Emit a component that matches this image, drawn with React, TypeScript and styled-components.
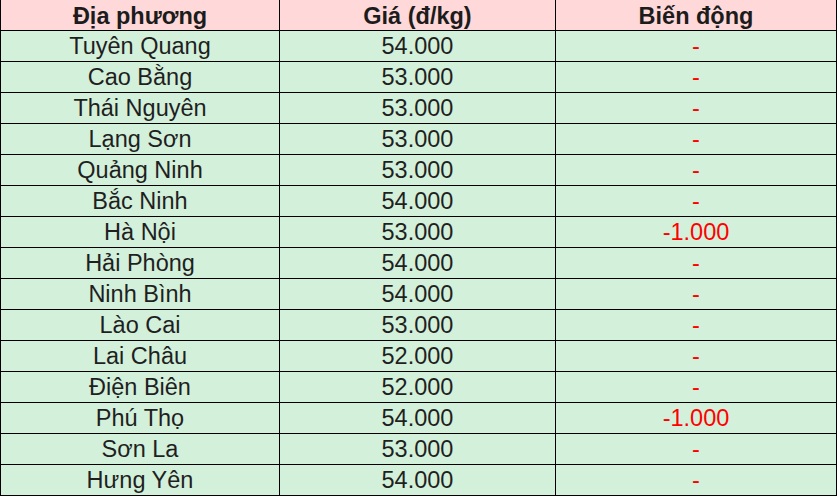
import React from 'react';
import styled, { createGlobalStyle } from 'styled-components';

const GlobalStyle = createGlobalStyle`
  html, body {
    margin: 0;
    padding: 0;
    background: #ffffff;
  }
  body {
    font-family: 'Liberation Sans', Arial, sans-serif;
  }
`;

const Table = styled.table`
  width: 836px;
  border-collapse: collapse;
  table-layout: fixed;
  border: 1px solid #000;
  border-top: none;
`;

const HeadCell = styled.th`
  height: 28px;
  padding: 2px 0 0;
  background: #ffd9d9;
  border: 1px solid #000;
  border-top: none;
  font-size: 23.5px;
  font-weight: 700;
  color: #1c1c1c;
  text-align: center;
  vertical-align: middle;
  line-height: 28px;
`;

const Cell = styled.td<{ $red?: boolean }>`
  height: 29px;
  padding: 1px 0 0;
  background: #d3f0db;
  border: 1px solid #000;
  font-size: 23.5px;
  color: ${({ $red }) => ($red ? '#ff0000' : '#1f1f1f')};
  text-align: center;
  vertical-align: middle;
  line-height: 29px;
`;

interface Row {
  place: string;
  price: string;
  change: string;
}

const rows: Row[] = [
  { place: 'Tuyên Quang', price: '54.000', change: '-' },
  { place: 'Cao Bằng', price: '53.000', change: '-' },
  { place: 'Thái Nguyên', price: '53.000', change: '-' },
  { place: 'Lạng Sơn', price: '53.000', change: '-' },
  { place: 'Quảng Ninh', price: '53.000', change: '-' },
  { place: 'Bắc Ninh', price: '54.000', change: '-' },
  { place: 'Hà Nội', price: '53.000', change: '-1.000' },
  { place: 'Hải Phòng', price: '54.000', change: '-' },
  { place: 'Ninh Bình', price: '54.000', change: '-' },
  { place: 'Lào Cai', price: '53.000', change: '-' },
  { place: 'Lai Châu', price: '52.000', change: '-' },
  { place: 'Điện Biên', price: '52.000', change: '-' },
  { place: 'Phú Thọ', price: '54.000', change: '-1.000' },
  { place: 'Sơn La', price: '53.000', change: '-' },
  { place: 'Hưng Yên', price: '54.000', change: '-' },
];

const App: React.FC = () => (
  <>
    <GlobalStyle />
    <Table>
      <colgroup>
        <col style={{ width: 279 }} />
        <col style={{ width: 276 }} />
        <col style={{ width: 281 }} />
      </colgroup>
      <thead>
        <tr>
          <HeadCell>Địa phương</HeadCell>
          <HeadCell>Giá (đ/kg)</HeadCell>
          <HeadCell>Biến động</HeadCell>
        </tr>
      </thead>
      <tbody>
        {rows.map((r) => (
          <tr key={r.place}>
            <Cell>{r.place}</Cell>
            <Cell>{r.price}</Cell>
            <Cell $red>{r.change}</Cell>
          </tr>
        ))}
      </tbody>
    </Table>
  </>
);

export default App;
